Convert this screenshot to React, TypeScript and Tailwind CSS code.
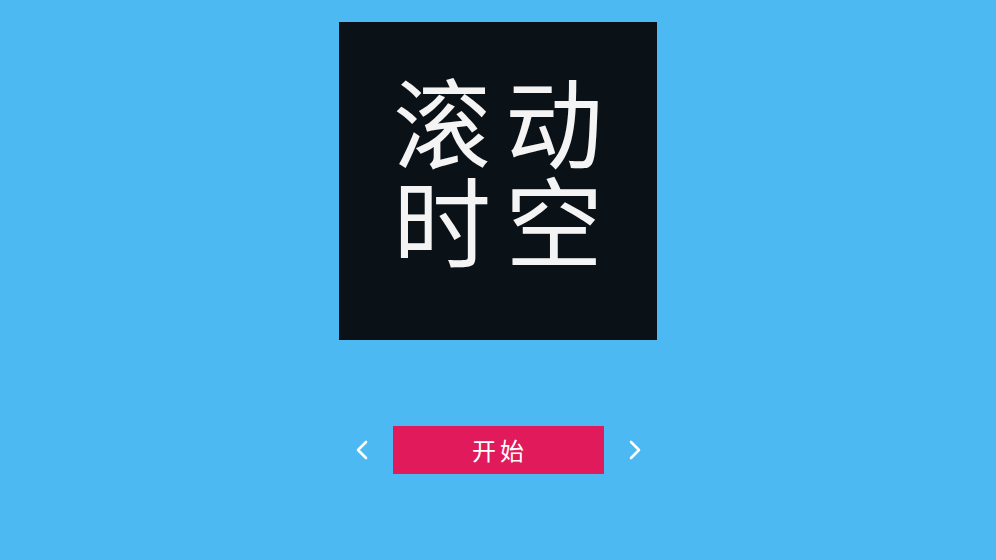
const font = { fontFamily: '"Noto Sans CJK SC", "Noto Sans", sans-serif' };

const Chevron = ({ dir }: { dir: 'left' | 'right' }) => (
    <svg width="14" height="20" viewBox="0 0 14 20" fill="none" stroke="white" strokeWidth="2.6" strokeLinecap="round" strokeLinejoin="round">
        {dir === 'left' ? <path d="M11 2 L3 10 L11 18" /> : <path d="M3 2 L11 10 L3 18" />}
    </svg>
);

const App = () => {
    return (
        <div className="w-[996px] h-[560px] bg-[#4cb9f2] flex flex-col items-center" style={font}>
            {/* title card */}
            <div className="mt-[22px] w-[318px] h-[318px] bg-[#0a1117] flex items-center justify-center pb-[26px]">
                <div className="text-[#f4f4f4] text-[98px] leading-[99px] tracking-[14px] pl-[14px] text-center">
                    <div>滚动</div>
                    <div>时空</div>
                </div>
            </div>

            <div className="mt-[86px] flex items-center gap-[24px]">
                <button className="w-[14px] h-[20px]">
                    <Chevron dir="left" />
                </button>
                <button className="w-[211px] h-[48px] bg-[#e01a5b] text-white text-[24px] tracking-[4px] pl-[4px]">
                    开始
                </button>
                <button className="w-[14px] h-[20px]">
                    <Chevron dir="right" />
                </button>
            </div>
        </div>
    );
};

export default App;
